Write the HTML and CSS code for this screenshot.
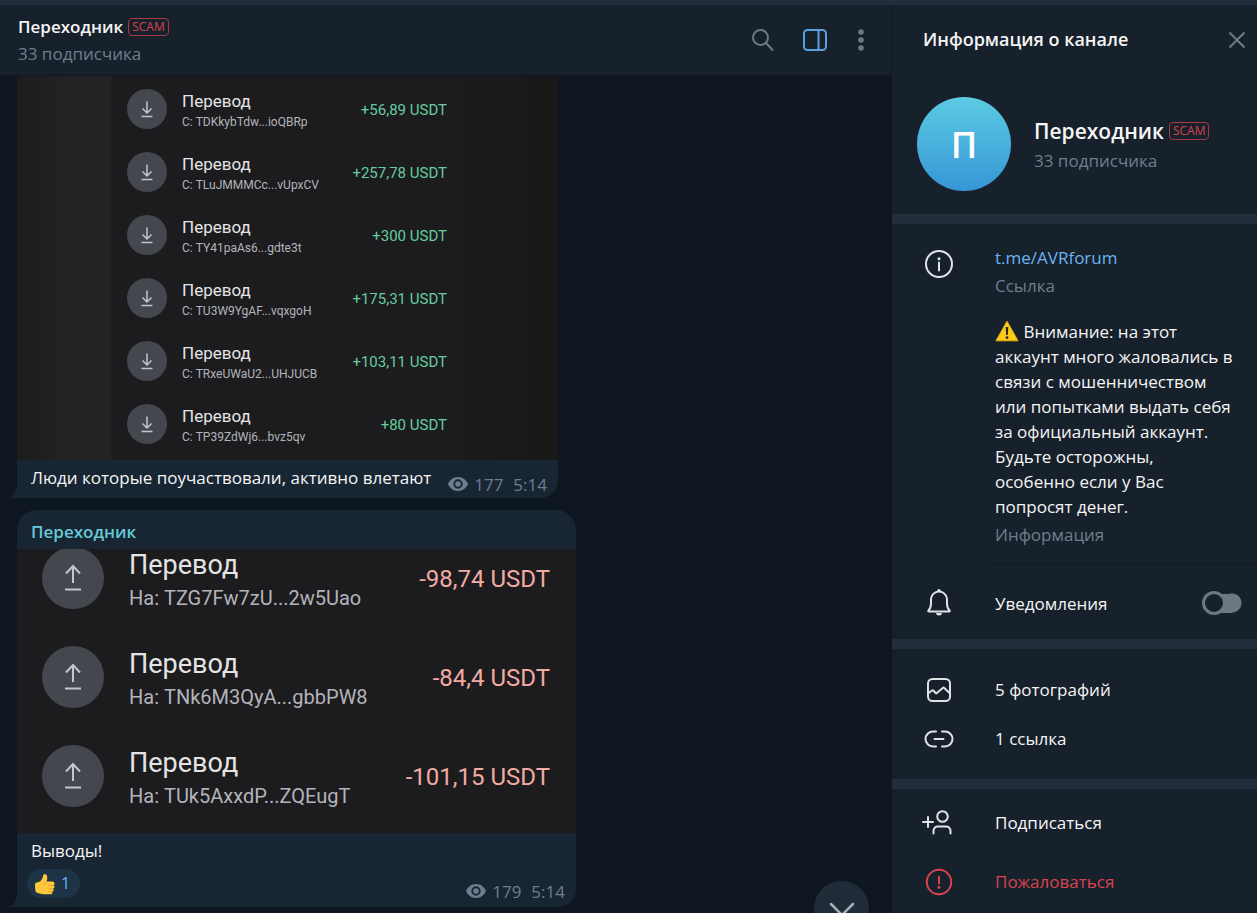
FILE: index.html
```html
<!DOCTYPE html>
<html lang="ru">
<head>
<meta charset="utf-8">
<meta name="viewport" content="width=device-width, initial-scale=1">
<title>Переходник</title>
<link rel="stylesheet" href="styles.css">
</head>
<body>
<svg class="sprite" aria-hidden="true">
  <symbol id="down" viewBox="0 0 40 40"><path d="M20 12.500V24M15.500 19.500l4.500 4.500 4.500-4.500M14.500 27.500h11"/></symbol>
  <symbol id="up" viewBox="0 0 62 62"><path d="M31 36V19.500M24 26.500l7-7.500 7 7.500M23 42.500h16"/></symbol>
  <symbol id="eye" viewBox="0 0 20 14"><path fill-rule="evenodd" d="M10 0C5.500 0 1.700 2.800 0 7c1.700 4.200 5.500 7 10 7s8.300-2.800 10-7C18.300 2.800 14.500 0 10 0Zm0 11.700A4.700 4.700 0 1 1 10 2.300a4.700 4.700 0 0 1 0 9.400ZM10 4.200a2.800 2.800 0 1 0 0 5.600 2.800 2.800 0 0 0 0-5.600Z"/></symbol>
  <symbol id="tail" viewBox="0 0 9 18"><path d="M8 0v3C8 10 6 15 0 17.500V18h9V0Z"/></symbol>
</svg>
<div class="app">
  <main class="chat">
    <header class="chat-head">
      <div class="chat-title">
        <h1 class="name">Переходник <span class="scam">SCAM</span></h1>
        <p class="muted">33 подписчика</p>
      </div>
      <div class="tools">
        <button class="icon-btn" aria-label="Поиск"><svg width="24" height="24" viewBox="0 0 24 24"><circle cx="9.500" cy="9.500" r="7.500"/><path d="M15 15l7 7.500"/></svg></button>
        <button class="icon-btn active" aria-label="Панель"><svg width="24" height="24" viewBox="0 0 24 24"><rect x="1" y="2" width="22" height="20" rx="3.500"/><path d="M15.500 2v20"/></svg></button>
        <button class="icon-btn narrow" aria-label="Меню"><svg class="dots" width="8" height="24" viewBox="0 0 8 24"><circle cx="4" cy="4" r="2.800"/><circle cx="4" cy="12" r="2.800"/><circle cx="4" cy="20" r="2.800"/></svg></button>
      </div>
    </header>
    <section class="feed">
      <article class="message first">
        <div class="photo photo-small">
          <ul class="transfers">
            <li class="transfer"><svg class="disc"><use href="#down"/></svg><div class="who"><b>Перевод</b><span>С: TDKkybTdw...ioQBRp</span></div><em>+56,89 USDT</em></li>
            <li class="transfer"><svg class="disc"><use href="#down"/></svg><div class="who"><b>Перевод</b><span>С: TLuJMMMCc...vUpxCV</span></div><em>+257,78 USDT</em></li>
            <li class="transfer"><svg class="disc"><use href="#down"/></svg><div class="who"><b>Перевод</b><span>С: TY41paAs6...gdte3t</span></div><em>+300 USDT</em></li>
            <li class="transfer"><svg class="disc"><use href="#down"/></svg><div class="who"><b>Перевод</b><span>С: TU3W9YgAF...vqxgoH</span></div><em>+175,31 USDT</em></li>
            <li class="transfer"><svg class="disc"><use href="#down"/></svg><div class="who"><b>Перевод</b><span>С: TRxeUWaU2...UHJUCB</span></div><em>+103,11 USDT</em></li>
            <li class="transfer"><svg class="disc"><use href="#down"/></svg><div class="who"><b>Перевод</b><span>С: TP39ZdWj6...bvz5qv</span></div><em>+80 USDT</em></li>
          </ul>
        </div>
        <div class="caption"><p>Люди которые поучаствовали, активно влетают</p><div class="meta"><svg class="eye"><use href="#eye"/></svg><span>177</span><time>5:14</time></div></div>
        <svg class="tail"><use href="#tail"/></svg>
      </article>
      <article class="message second">
        <h2 class="author">Переходник</h2>
        <div class="photo photo-large">
          <ul class="transfers">
            <li class="transfer"><svg class="disc"><use href="#up"/></svg><div class="who"><b>Перевод</b><span>На: TZG7Fw7zU...2w5Uao</span></div><em>-98,74 USDT</em></li>
            <li class="transfer"><svg class="disc"><use href="#up"/></svg><div class="who"><b>Перевод</b><span>На: TNk6M3QyA...gbbPW8</span></div><em>-84,4 USDT</em></li>
            <li class="transfer"><svg class="disc"><use href="#up"/></svg><div class="who"><b>Перевод</b><span>На: TUk5AxxdP...ZQEugT</span></div><em>-101,15 USDT</em></li>
          </ul>
        </div>
        <div class="caption stacked"><p>Выводы!</p>
          <div class="foot">
            <button class="reaction"><svg width="22" height="22" viewBox="0 0 22 22"><path fill="#ffc83d" d="M1 11.500C1 10 2.500 9.500 4 9.300 7 8.500 8.500 6 9 3.500 9.200 1.500 10 .7 11.200 1c1.800.5 2.300 2.500 2 4.500L12.700 8.500H18c1.700 0 2.800 1 2.600 2.300-.1.700-.6 1.200-1.100 1.500.8.500 1.100 1.200.9 2-.2.800-.7 1.300-1.400 1.500.5.500.7 1.100.5 1.800-.2.700-.7 1.100-1.300 1.300.3.400.3.900.1 1.400-.3.600-.9.900-1.800.9H9c-2 0-3-.5-4-.9-2.500-.3-3.500-1.300-3.700-3Z"/><path fill="none" stroke="#e09b24" d="M12.500 9c-1.500.8-2.200 1.700-2.200 3M19.500 12.300h-5M19 15.800h-4.500M18.200 18.900h-4"/></svg>1</button>
            <div class="meta"><svg class="eye"><use href="#eye"/></svg><span>179</span><time>5:14</time></div>
          </div>
        </div>
        <svg class="tail"><use href="#tail"/></svg>
      </article>
      <button class="to-bottom" aria-label="Вниз"><svg width="26" height="14" viewBox="0 0 26 14"><path d="M2 2l11 11L24 2"/></svg></button>
    </section>
  </main>
  <aside class="info">
    <header class="info-head"><h2>Информация о канале</h2><button class="icon-btn close" aria-label="Закрыть"><svg width="18" height="18" viewBox="0 0 18 18"><path d="M1.500 1.500l15 15M16.500 1.500l-15 15"/></svg></button></header>
    <div class="profile">
      <div class="avatar">П</div>
      <div><h3 class="profile-name">Переходник <span class="scam">SCAM</span></h3><p class="muted">33 подписчика</p></div>
    </div>
    <section class="block about">
      <svg class="ico" width="30" height="30" viewBox="0 0 30 30"><circle cx="15" cy="15" r="13"/><path d="M15 13.500v8"/><circle class="fill" cx="15" cy="9.800" r="1.500"/></svg>
      <div class="about-text">
        <a href="#">t.me/AVRforum</a>
        <p class="muted">Ссылка</p>
        <p class="warning"><svg width="24" height="22" viewBox="0 0 24 22"><path fill="#fecb1b" stroke="#e9ae12" d="M12 1.200 23 20.800H1Z" stroke-linejoin="round"/><path fill="#29251c" d="M10.700 7h2.600l-.5 8h-1.600Z"/><circle cx="12" cy="17.600" r="1.400" fill="#29251c"/></svg> Внимание: на этот аккаунт много жаловались в связи с мошенничеством или попытками выдать себя за официальный аккаунт. Будьте осторожны, особенно если у Вас попросят денег.</p>
        <p class="muted">Информация</p>
      </div>
    </section>
    <section class="notify">
      <svg class="ico" width="30" height="30" viewBox="0 0 30 30"><path d="M4.500 22.500c2-2 2.500-3.500 2.500-7V11.500a8 8 0 0 1 16 0v4c0 3.500.5 5 2.500 7 .5.600.2 1-.5 1H5c-.7 0-1-.4-.5-1Z"/><path class="fill" d="M12 25h6c-.3 1.800-1.300 2.500-3 2.500s-2.700-.7-3-2.500ZM13 3.500c0-3.500 4-3.500 4 0Z"/></svg>
      <label for="notify">Уведомления</label>
      <input class="switch" type="checkbox" role="switch" id="notify">
    </section>
    <section class="block media">
      <button class="item"><svg class="ico" width="30" height="30" viewBox="0 0 30 30"><rect x="4" y="4" width="22" height="22" rx="4.500"/><path d="M4 18.500l4-3c.6-.4 1-.3 1.500.2l2 2.300c.4.500.8.500 1.300 0l6-5c.5-.5 1-.4 1.500 0L26 18.500"/></svg>5 фотографий</button>
      <button class="item"><svg class="ico" width="30" height="30" viewBox="0 0 30 30"><path d="M12 7.500H9a7.500 7.500 0 0 0 0 15h3M18 7.500h3a7.500 7.500 0 0 1 0 15h-3M10.500 15h9"/></svg>1 ссылка</button>
    </section>
    <section class="block actions">
      <button class="item"><svg class="ico" width="30" height="30" viewBox="0 0 30 30"><circle cx="18.500" cy="8.500" r="5.300"/><path d="M9.500 25.500V23c0-2.800 2-4.500 4.500-4.500h8c2.500 0 4.500 1.700 4.500 4.500v2.500M4 9v10M-1 14h10"/></svg>Подписаться</button>
      <button class="item danger"><svg class="ico" width="30" height="30" viewBox="0 0 30 30"><circle cx="15" cy="15" r="12.200"/><path d="M15 9.500v7"/><circle class="fill" cx="15" cy="20.300" r="1.500"/></svg>Пожаловаться</button>
    </section>
  </aside>
</div>
</body>
</html>
```
FILE: styles.css
```css
*, *::before { box-sizing: border-box; margin: 0; padding: 0; }

body {
  height: 100vh;
  border-top: 5px solid #232e3c;
  overflow: hidden;
  background: #17212b;
  color: #f5f5f5;
  font: 17px/25px "Open Sans", "Noto Sans", sans-serif;
}

ul { list-style: none; }
button { border: 0; background: none; color: inherit; font: inherit; cursor: pointer; }
svg { display: block; flex: none; overflow: visible; }
h1, h2, h3 { font-weight: 600; }
.sprite { position: absolute; width: 0; height: 0; }

.app { display: grid; grid-template-columns: minmax(0, 1fr) 366px; height: 100%; }

.chat { display: flex; flex-direction: column; min-height: 0; }
.chat-head {
  display: flex;
  align-items: center;
  justify-content: space-between;
  padding: 8px 26px 8px 18px;
  border-bottom: 1px solid #101921;
}
.name { display: flex; align-items: center; gap: 5px; font-size: 17px; line-height: 27px; }
.muted { color: #6d7f8f; line-height: 27px; }
.scam {
  padding: 0 3px;
  border: 1px solid #a83a46;
  border-radius: 4px;
  color: #d8434f;
  font-size: 12px;
  font-weight: 500;
  line-height: 16px;
}

.tools { display: flex; align-items: center; gap: 28px; }
.icon-btn svg { fill: none; stroke: #6c7883; stroke-width: 2; }
.icon-btn.active svg { stroke: #5b9fdd; }
.icon-btn.narrow { margin-left: 2px; }
.icon-btn .dots { fill: #6c7883; stroke: none; }

.feed {
  position: relative;
  display: flex;
  flex: 1;
  flex-direction: column;
  justify-content: flex-end;
  align-items: flex-start;
  gap: 12px;
  min-height: 0;
  padding: 0 17px 6px;
  overflow: hidden;
  background: #0e1621;
}
.message { position: relative; flex: none; max-width: 100%; border-radius: 20px 20px 18px 0; background: #182533; }
.first { width: 541px; }
.second { width: 559px; }
.tail { position: absolute; bottom: 0; left: -8px; width: 9px; height: 18px; fill: #182533; }
.author { padding: 9px 14px 5px; color: #65c9d8; font-size: 17px; }

.photo { overflow: hidden; background: #1c1c1e; font-family: Roboto, sans-serif; }
.photo-small {
  padding: 3px 95px 5px 94px;
  background: linear-gradient(90deg, #1c1c1c, #232323 10% 17.300%, #1c1c1e 17.400% 82.400%, #1b1b1b 82.500%, #181818);
}
.photo-large { display: flex; flex-direction: column; justify-content: flex-end; height: 284px; padding-bottom: 8px; }
.transfer { display: flex; align-items: center; }
.photo-small .transfer { height: 63px; padding: 0 16px; gap: 15px; }
.photo-large .transfer { height: 99px; padding: 0 26px 0 25px; gap: 25px; }
.who { display: flex; flex: 1; flex-direction: column; }
.who b { color: #e4e4e6; font-weight: 400; }
.who span { color: #b3b4bb; }
.transfer em { font-style: normal; }
.disc { border-radius: 50%; background: #44474e; fill: none; stroke: #c5c6cc; }
.photo-small .disc { width: 40px; height: 40px; stroke-width: 1.500; }
.photo-small .who { padding-top: 4px; }
.photo-small b { font-size: 17px; line-height: 22px; }
.photo-small .who span { font-size: 12px; line-height: 20px; }
.photo-small em { padding-top: 4px; color: #65cda0; font-size: 15px; }
.photo-large .disc { width: 62px; height: 62px; stroke-width: 2; }
.photo-large .who { padding-top: 8px; }
.photo-large b { font-size: 27px; line-height: 32px; }
.photo-large .who span { font-size: 20px; line-height: 34px; }
.photo-large em { padding-top: 4px; color: #f2aba3; font-size: 24px; }

.caption { display: flex; justify-content: space-between; padding: 5px 11px 4px 14px; }
.caption p { padding-bottom: 4px; }
.stacked { display: block; padding: 5px 11px 2px 14px; }
.meta { display: flex; align-items: center; align-self: flex-end; gap: 6px; height: 20px; color: #6d7f8f; }
.meta time { margin-left: 4px; }
.eye { width: 20px; height: 14px; fill: #6d7f8f; }
.foot { display: flex; justify-content: space-between; padding-top: 2px; }
.foot .meta { height: 28px; }
.caption .reaction {
  display: flex;
  align-items: center;
  gap: 5px;
  height: 29px;
  margin: 0 0 7px -4px;
  padding: 0 10px 0 7px;
  border-radius: 15px;
  background: #1d3447;
  color: #6ab3f3;
  font-size: 16px;
}
.to-bottom {
  position: absolute;
  right: 22px;
  bottom: -23px;
  display: grid;
  place-items: center;
  width: 55px;
  height: 55px;
  border-radius: 50%;
  background: #202b38;
}
.to-bottom svg { fill: none; stroke: #a4afba; stroke-width: 2.500; stroke-linecap: round; }

.info { min-width: 0; overflow: hidden; border-left: 1px solid #101921; }
.info-head { display: flex; align-items: center; justify-content: space-between; padding: 22px 11px 22px 31px; }
.info-head h2 { font-size: 18px; }
.profile { display: flex; align-items: center; gap: 23px; padding: 23px 25px; }
.avatar {
  display: grid;
  place-items: center;
  width: 94px;
  height: 94px;
  border-radius: 50%;
  background: linear-gradient(#5ccbe3, #3696d5);
  color: #fff;
  font-size: 36px;
  font-weight: 600;
}
.profile-name { display: flex; align-items: center; gap: 5px; font-size: 21px; line-height: 32px; }
.block { border-top: 10px solid #232e3c; }
.ico { fill: none; stroke: #dfe3e6; stroke-width: 2; stroke-linecap: round; stroke-linejoin: round; }
.ico .fill { fill: #dfe3e6; stroke: none; }
.about { display: flex; gap: 41px; padding: 21px 20px 14px 32px; }
.about .ico { margin-top: 4px; }
.about a { display: block; color: #6ab3f3; text-decoration: none; }
.about .muted { line-height: 31px; }
.warning { padding-top: 18px; }
.warning svg { display: inline-block; vertical-align: -4px; }
.notify { display: flex; align-items: center; gap: 41px; padding: 24px 15px 21px 32px; background: linear-gradient(#101921, #101921) 100px 0 / 100% 1px no-repeat; }
.notify label { flex: 1; }
.switch {
  display: flex;
  align-items: center;
  width: 40px;
  height: 24px;
  border-radius: 12px;
  appearance: none;
  background: linear-gradient(#6c7883, #6c7883) 12px 3px / 18px 19px no-repeat, radial-gradient(circle at 30px 12px, #6c7883 9px, transparent 10px);
}
.switch::before { width: 24px; height: 24px; border: 3px solid #6c7883; border-radius: 50%; background: #17212b; content: ""; }
.item { display: flex; align-items: center; gap: 41px; width: 100%; padding: 0 32px; text-align: left; }
.media { padding: 16px 0; }
.media .item { height: 49px; }
.actions { padding: 4px 0; }
.actions .item { height: 59px; }
.danger { color: #d8434f; }
.danger .ico { stroke: #d8434f; }
.danger .fill { fill: #d8434f; }
```
